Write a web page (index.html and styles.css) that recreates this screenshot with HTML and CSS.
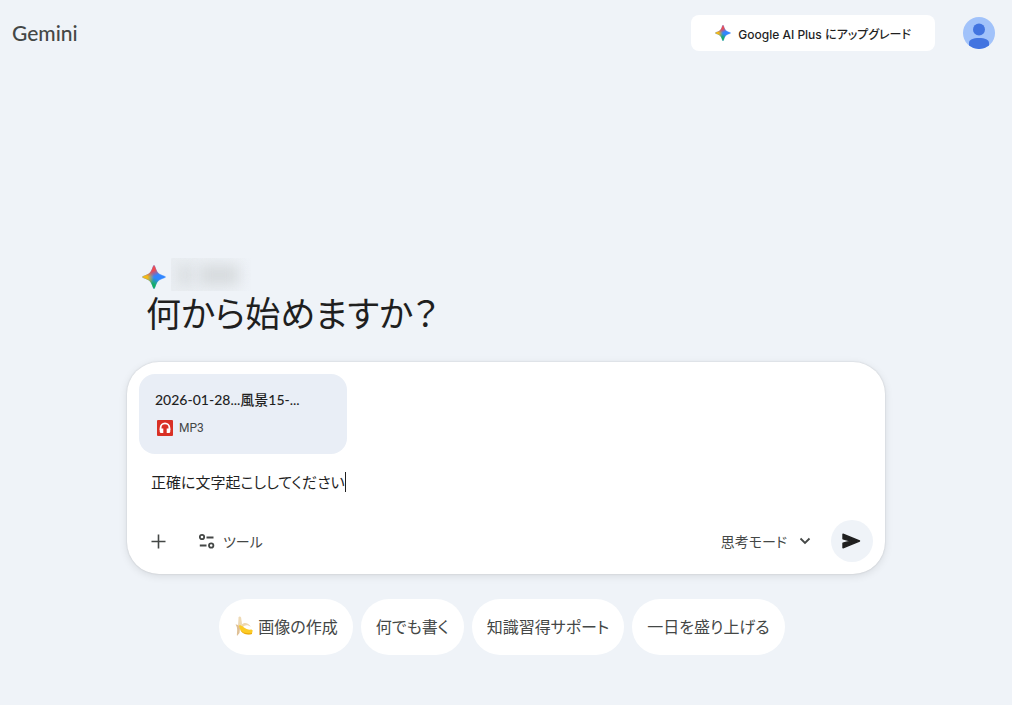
FILE: index.html
```
<!DOCTYPE html>
<html lang="ja">
<head>
    <meta charset="UTF-8">
    <meta name="viewport" content="width=device-width, initial-scale=1.0">
    <title>Gemini</title>
    <link rel="stylesheet" href="styles.css">
</head>
<body>

    <!-- Degradados del destello, compartidos por los dos iconos -->
    <svg class="defs" width="0" height="0" aria-hidden="true">
        <defs>
            <radialGradient id="red" gradientUnits="userSpaceOnUse" cx="9" cy="0" r="12">
                <stop offset="0.5" stop-color="#f04a50"/>
                <stop offset="1" stop-color="#f04a50" stop-opacity="0"/>
            </radialGradient>
            <radialGradient id="yellow" gradientUnits="userSpaceOnUse" cx="0" cy="12" r="12">
                <stop offset="0.45" stop-color="#f6b912"/>
                <stop offset="1" stop-color="#f6b912" stop-opacity="0"/>
            </radialGradient>
            <radialGradient id="green" gradientUnits="userSpaceOnUse" cx="9" cy="24" r="12">
                <stop offset="0.4" stop-color="#14b05c"/>
                <stop offset="1" stop-color="#14b05c" stop-opacity="0"/>
            </radialGradient>
            <path id="star" d="M12 0.5C12.7 1 13.2 3.2 14.2 5.3C15.3 7.6 16.4 8.7 18.7 9.8C20.8 10.8 23 11.3 23.5 12C23 12.7 20.8 13.2 18.7 14.2C16.4 15.3 15.3 16.4 14.2 18.7C13.2 20.8 12.7 23 12 23.5C11.3 23 10.8 20.8 9.8 18.7C8.7 16.4 7.6 15.3 5.3 14.2C3.2 13.2 1 12.7 0.5 12C1 11.3 3.2 10.8 5.3 9.8C7.6 8.7 8.7 7.6 9.8 5.3C10.8 3.2 11.3 1 12 0.5Z"/>
            <symbol id="spark" viewBox="0 0 24 24">
                <use href="#star" fill="#3186ff" stroke="#3186ff" stroke-width="0.6"/>
                <use href="#star" fill="url(#green)" stroke="url(#green)" stroke-width="0.6"/>
                <use href="#star" fill="url(#yellow)" stroke="url(#yellow)" stroke-width="0.6"/>
                <use href="#star" fill="url(#red)" stroke="url(#red)" stroke-width="0.6"/>
            </symbol>
        </defs>
    </svg>

    <!-- Cabecera -->
    <header class="header">
        <a class="brand" href="#">Gemini</a>
        <div class="header-right">
            <button type="button" class="upgrade-btn">
                <svg width="16" height="16" aria-hidden="true"><use href="#spark"/></svg>
                Google AI Plus にアップグレード
            </button>
            <button type="button" class="avatar" aria-label="アカウント">
                <svg width="32" height="32" viewBox="0 0 32 32" aria-hidden="true">
                    <circle cx="16" cy="16" r="16" fill="#a1c2fa"/>
                    <circle cx="16" cy="12.5" r="6" fill="#4274e0"/>
                    <path fill="#4274e0" d="M6 28.5V26C6 22.5 10 21 16 21S26 22.5 26 26V28.5A16 16 0 0 1 6 28.5Z"/>
                </svg>
            </button>
        </div>
    </header>

    <main class="main">
        <!-- Saludo -->
        <div class="greeting">
            <div class="greeting-name">
                <svg width="24" height="24" aria-hidden="true"><use href="#spark"/></svg>
                <span class="hidden-name"><i class="smudge small"></i><i class="smudge"></i></span>
            </div>
            <h1>何から始めますか？</h1>
        </div>

        <!-- Cuadro de mensaje -->
        <form class="composer">
            <div class="file-card">
                <div class="file-name">2026-01-28...風景15-...</div>
                <div class="file-type">
                    <svg width="16" height="16" viewBox="0 0 16 16" aria-hidden="true">
                        <rect width="16" height="16" rx="1" fill="#d93025"/>
                        <path fill="none" stroke="#fff" stroke-width="1.8" d="M3.6 10V7.8A4.4 4.4 0 0 1 12.4 7.8V10"/>
                        <path fill="#fff" d="M2.7 8.5H6.3V13H4.2A1.5 1.5 0 0 1 2.7 11.5ZM9.7 8.5H13.3V11.5A1.5 1.5 0 0 1 11.8 13H9.7Z"/>
                    </svg>
                    MP3
                </div>
            </div>
            <div class="prompt">
                <input type="text" aria-label="プロンプト" value="正確に文字起こししてください">
                <span class="caret"></span>
            </div>
            <div class="toolbar">
                <button type="button" class="tool-btn" aria-label="追加">
                    <svg width="16" height="16" viewBox="0 0 16 16" aria-hidden="true">
                        <path fill="none" stroke="#444746" stroke-width="1.6" d="M7.5 1.5V15.5M0.5 8.5H14.5"/>
                    </svg>
                </button>
                <button type="button" class="tool-btn tools">
                    <svg width="16" height="16" viewBox="0 0 16 16" fill="none" stroke="#444746" stroke-width="1.8" aria-hidden="true">
                        <circle cx="3" cy="4" r="2.2"/>
                        <path d="M7.5 4.5H14.5M0.8 12.5H7.5"/>
                        <circle cx="12.2" cy="12.5" r="2.2"/>
                    </svg>
                    ツール
                </button>
                <button type="button" class="tool-btn mode">
                    思考モード
                    <svg width="12" height="12" viewBox="0 0 12 12" aria-hidden="true">
                        <path fill="none" stroke="#444746" stroke-width="1.8" d="M1.5 3.5L6 8L10.5 3.5"/>
                    </svg>
                </button>
                <button type="submit" class="send-btn" aria-label="送信">
                    <svg width="20" height="20" viewBox="0 0 20 20" aria-hidden="true">
                        <path fill="#1f1f1f" stroke="#1f1f1f" stroke-width="1.4" stroke-linejoin="round" d="M1 3.2L17.5 10L1 16.8V12.2L9 10L1 7.8Z"/>
                    </svg>
                </button>
            </div>
        </form>

        <!-- Sugerencias -->
        <div class="chips">
            <button type="button" class="chip">
                <svg width="20" height="20" viewBox="0 0 20 20" aria-hidden="true">
                    <path fill="#eedab6" d="M4.5 1.5C5 0 6.800 0.200 7.200 2L8 8L7 11.500L4 10.500Z"/>
                    <path fill="#dfc095" d="M1.5 8.500C3 8 5.500 9.500 6 12L5.500 17L3 20C2.500 17 4.500 12.500 1.500 8.500Z"/>
                    <path fill="#eed7b0" d="M7.500 8.500C10.500 5.500 14.500 7 17 11C14 8.800 11 8.500 8.500 11.500Z"/>
                    <path fill="#fccb24" d="M5 9.500C7 8.500 8.500 10 10 11.500C12 13 14.500 14 17.500 13.500L18.700 14.500L18 17.500C13 19.500 6 17.500 5 9.500Z"/>
                    <path fill="#eba90a" d="M6 13.500C8.500 17 13 17.800 18 17V18C13 19.500 8 18 6 13.500Z"/>
                </svg>
                画像の作成
            </button>
            <button type="button" class="chip">何でも書く</button>
            <button type="button" class="chip">知識習得サポート</button>
            <button type="button" class="chip">一日を盛り上げる</button>
        </div>
    </main>

</body>
</html>
```
FILE: styles.css
```
* {
    box-sizing: border-box;
}

body {
    margin: 0;
    background-color: #eff3f8;
    color: #1f1f1f;
    font-family: "Noto Sans CJK JP", sans-serif;
    font-feature-settings: "palt";
}

button, input {
    font-family: inherit;
    font-feature-settings: "palt";
    color: inherit;
    border: none;
    padding: 0;
    background: none;
}

button {
    cursor: pointer;
}

svg {
    display: block;
    flex-shrink: 0;
}

.defs {
    position: absolute;
}

/* Cabecera */
.header {
    display: flex;
    justify-content: space-between;
    align-items: center;
    padding: 15px 17px 0 12px;
}

.brand {
    font-family: Lato, sans-serif;
    font-size: 21px;
    line-height: 36px;
    font-weight: 500;
    color: #444746;
    text-decoration: none;
}

.header-right {
    display: flex;
    align-items: center;
    gap: 28px;
}

.upgrade-btn {
    display: flex;
    align-items: center;
    gap: 7px;
    height: 36px;
    padding: 0 24px;
    border-radius: 8px;
    background-color: white;
    font-family: Inter, "Noto Sans CJK JP", sans-serif;
    font-size: 12px;
    font-weight: 500;
}

.avatar {
    border-radius: 50%;
}

/* Contenido */
.main {
    max-width: 758px;
    margin: 0 auto;
    padding-top: 207px;
}

.greeting {
    padding: 0 15px;
}

.greeting-name {
    display: flex;
    align-items: flex-end;
    gap: 5px;
    height: 33px;
}

.greeting-name svg {
    margin-bottom: 2px;
}

.hidden-name {
    display: flex;
    align-items: center;
    gap: 8px;
    width: 80px;
    height: 33px;
    padding-left: 8px;
    overflow: hidden;
    background: linear-gradient(90deg, #eaeef2, #eff3f8);
}

.smudge {
    width: 40px;
    height: 20px;
    background-color: #d6dadd;
    filter: blur(7px);
}

.smudge.small {
    width: 12px;
}

h1 {
    margin: 0;
    padding-left: 4px;
    font-size: 35px;
    line-height: 42px;
    font-weight: 400;
}

/* Cuadro de mensaje */
.composer {
    margin-top: 29px;
    padding: 12px;
    border-radius: 32px;
    background-color: white;
    box-shadow: 0 0 2px rgba(0, 0, 0, 0.14), 0 2px 8px rgba(0, 0, 0, 0.1);
}

.file-card {
    width: 208px;
    height: 80px;
    padding: 16px;
    border-radius: 16px;
    background-color: #e9eef6;
}

.file-name {
    font-family: Lato, "Noto Sans CJK JP", sans-serif;
    font-size: 14px;
    line-height: 20px;
    font-weight: 500;
}

.file-type {
    display: flex;
    align-items: center;
    gap: 6px;
    margin-top: 8px;
    padding-left: 2px;
    font-family: Roboto, sans-serif;
    font-size: 12px;
    line-height: 20px;
    color: #444746;
}

.prompt {
    display: flex;
    align-items: center;
    height: 24px;
    margin-top: 16px;
    padding-left: 12px;
}

.prompt input {
    field-sizing: content;
    font-size: 15px;
    line-height: 24px;
    outline: none;
}

.caret {
    width: 1px;
    height: 20px;
    background-color: #1f1f1f;
}

.toolbar {
    display: flex;
    align-items: center;
    height: 42px;
    margin-top: 26px;
    padding-left: 12px;
}

.tool-btn {
    display: flex;
    align-items: center;
    gap: 8px;
    font-size: 14px;
    color: #444746;
}

.tools {
    margin-left: 32px;
}

.mode {
    gap: 12px;
    margin-left: auto;
    margin-right: 20px;
}

.send-btn {
    display: flex;
    align-items: center;
    justify-content: center;
    width: 42px;
    height: 42px;
    border-radius: 50%;
    background-color: #eff3f8;
}

/* Sugerencias */
.chips {
    display: flex;
    flex-wrap: wrap;
    justify-content: center;
    gap: 8px;
    margin-top: 25px;
    padding-right: 8px;
}

.chip {
    display: flex;
    align-items: center;
    gap: 4px;
    height: 56px;
    padding: 0 15px 3px;
    border-radius: 28px;
    background-color: white;
    font-size: 16px;
    color: #444746;
}
```
